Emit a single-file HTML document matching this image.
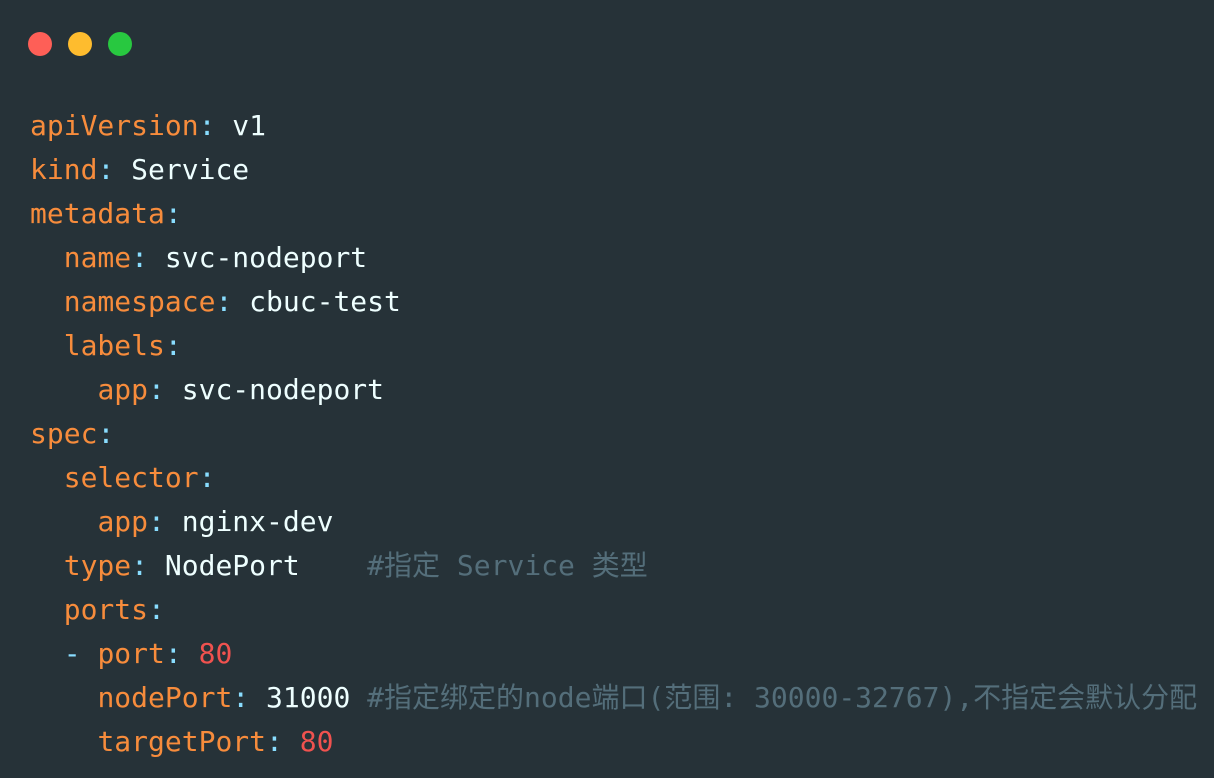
<!DOCTYPE html>
<html><head><meta charset="utf-8"><style>
html,body{margin:0;padding:0;}
body{width:1214px;height:778px;background:#263238;overflow:hidden;position:relative;}
.dot{position:absolute;top:32px;width:24px;height:24px;border-radius:50%;}
pre{position:absolute;left:30px;top:104px;margin:0;font-family:"DejaVu Sans Mono","Liberation Mono","Noto Sans CJK SC",monospace;font-size:28px;line-height:44px;color:#eeffff;white-space:pre;}
.k{color:#f78c3c}.c{color:#89ddff}.n{color:#f0524f}.m{color:#546e7a;font-family:"DejaVu Sans Mono","Noto Sans CJK SC",monospace}
</style></head><body>
<div class="dot" style="left:28px;background:#fe5f57"></div>
<div class="dot" style="left:68px;background:#febc2e"></div>
<div class="dot" style="left:108px;background:#28c840"></div>
<pre><span class="k">apiVersion</span><span class="c">:</span> v1
<span class="k">kind</span><span class="c">:</span> Service
<span class="k">metadata</span><span class="c">:</span>
  <span class="k">name</span><span class="c">:</span> svc-nodeport
  <span class="k">namespace</span><span class="c">:</span> cbuc-test
  <span class="k">labels</span><span class="c">:</span>
    <span class="k">app</span><span class="c">:</span> svc-nodeport
<span class="k">spec</span><span class="c">:</span>
  <span class="k">selector</span><span class="c">:</span>
    <span class="k">app</span><span class="c">:</span> nginx-dev
  <span class="k">type</span><span class="c">:</span> NodePort    <span class="m">#指定 Service 类型</span>
  <span class="k">ports</span><span class="c">:</span>
  <span class="c">-</span> <span class="k">port</span><span class="c">:</span> <span class="n">80</span>
    <span class="k">nodePort</span><span class="c">:</span> 31000 <span class="m">#指定绑定的node端口(范围: 30000-32767),不指定会默认分配</span>
    <span class="k">targetPort</span><span class="c">:</span> <span class="n">80</span></pre>
</body></html>
